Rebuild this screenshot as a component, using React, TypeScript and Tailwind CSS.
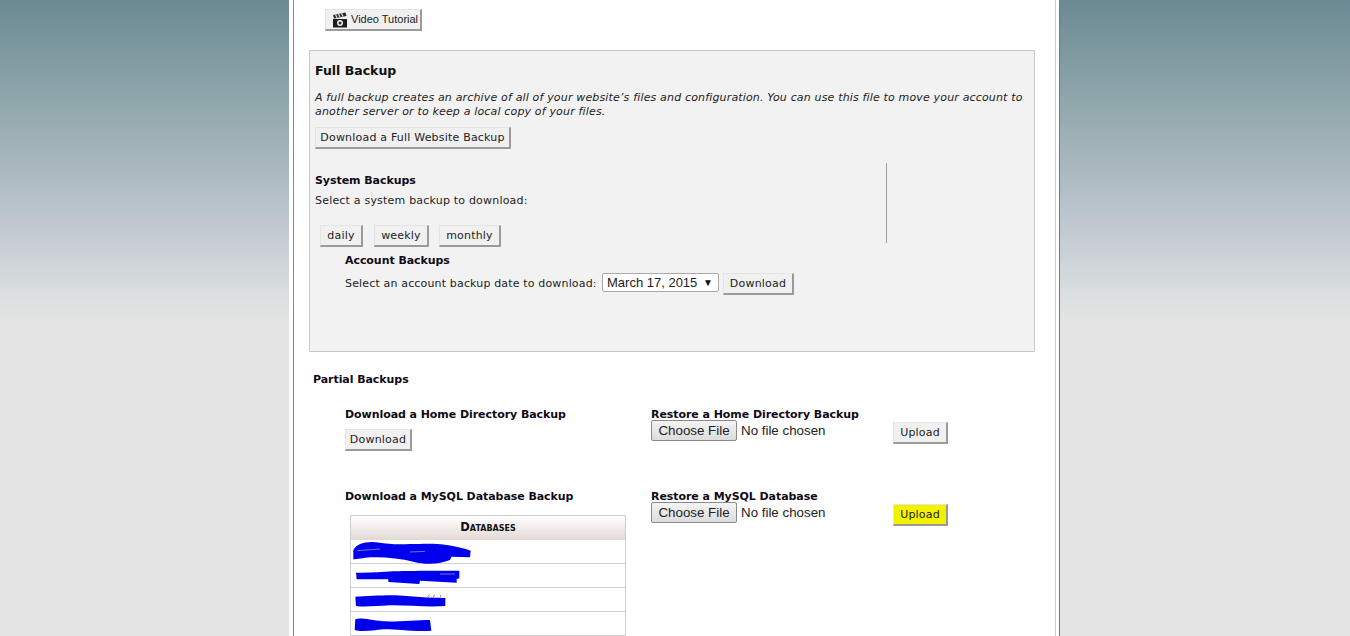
import React from "react";

function Btn({ children, className = "" }: { children: React.ReactNode; className?: string }) {
  return (
    <span
      className={
        "inline-flex align-top items-center justify-center whitespace-nowrap h-[22px] pt-[1px] bg-[#f0f0f0] text-[#222] text-[11px] tracking-[0.2px] border-t border-l border-t-[#e4e4e4] border-l-[#e4e4e4] border-r-2 border-b-2 border-r-[#9a9a9a] border-b-[#9a9a9a] " +
        className
      }
    >
      {children}
    </span>
  );
}

function FileInput() {
  return (
    <div className="flex items-center h-[21px] -mt-[2px] font-['Liberation_Sans',sans-serif] text-[13.33px] text-[#222] whitespace-nowrap">
      <span className="flex items-center justify-center w-[86px] h-[21px] rounded-[2px] border border-[#8a8a8a] bg-gradient-to-b from-[#f4f4f4] to-[#dcdcdc]">
        Choose File
      </span>
      <span className="ml-[4px]">No file chosen</span>
    </div>
  );
}

function Clapper() {
  return (
    <svg width="16" height="16" viewBox="0 0 16 16" className="absolute left-[6px] top-[2px]">
      <path d="M1 7 H15 V15.5 H1 Z" fill="#1c1c1c" />
      <path d="M1 3 L13.5 0.5 L14.5 4 L2 6.5 Z" fill="#2a2a2a" />
      <path d="M3.5 2.5 L5 5.8 M6.5 1.9 L8 5.2 M9.5 1.3 L11 4.6" stroke="#e2e2e2" strokeWidth="1.2" />
      <circle cx="8" cy="11" r="3" fill="#f0f0f0" />
      <circle cx="8" cy="11" r="1.5" fill="#333" />
    </svg>
  );
}

const H = "font-bold text-[11px] tracking-[-0.06px] leading-[14px] text-[#110a16] whitespace-nowrap";
const P = "text-[11px] tracking-[0.2px] text-[#222] whitespace-nowrap";

function Scribbles() {
  return (
    <svg
      viewBox="0 0 900 378"
      width="300"
      height="126"
      className="absolute left-[-11px] top-[-6px] pointer-events-none"
    >
      <g fill="#0000ee">
        <path d="M40 120 C50 100 80 92 120 98 C170 105 190 102 240 102 C290 100 340 105 392 122 L390 142 L335 140 L330 150 C300 162 260 165 220 155 C180 145 130 140 90 142 C70 144 50 148 40 148 Z" />
        <path d="M48 188 C80 190 120 186 160 184 C200 182 300 182 358 182 L358 205 L350 207 L350 218 L240 212 L238 222 L145 216 L145 208 L50 208 Z" />
        <path d="M46 260 C90 258 160 252 200 258 C240 262 280 264 316 264 L316 288 C260 292 200 285 150 286 C110 288 70 292 48 288 Z" />
        <path d="M46 328 C60 322 90 330 130 334 C170 336 230 330 270 330 L274 362 C220 366 160 356 130 358 C100 362 60 366 44 360 Z" />
      </g>
      <path d="M52 122 L120 117 M210 126 L255 124 M300 192 L345 192" stroke="#aab" strokeWidth="2" fill="none" />
      <path d="M262 262 L268 254 M280 262 L284 254 M300 262 L303 255" stroke="#444" strokeWidth="2" fill="none" />
    </svg>
  );
}

export default function App() {
  return (
    <div className="h-[636px] overflow-hidden bg-[linear-gradient(to_bottom,#6b8a93_0px,#93a9ae_110px,#bcc5cd_215px,#dce0e1_300px,#e4e4e4_325px,#e4e4e4_636px)] font-['DejaVu_Sans',sans-serif]">
      <div className="w-[771px] h-[636px] ml-[289px] bg-white pl-[4px] pr-[3px] border-r border-[#777]">
        <div className="h-[636px] border-l border-r border-l-[#888] border-r-[#ccc] pl-[15px]">
          <div className="pl-[16px] pt-[9px] h-[50px]">
            <span className="relative flex items-center h-[22px] w-[97px] pl-[25px] bg-[#f0f0f0] text-[#222] font-['Liberation_Sans',sans-serif] text-[11px] whitespace-nowrap border-t border-l border-t-[#e4e4e4] border-l-[#e4e4e4] border-r-2 border-b-2 border-r-[#9a9a9a] border-b-[#9a9a9a]">
              <Clapper />
              Video Tutorial
            </span>
          </div>

          <section className="w-[726px] h-[302px] bg-[#f2f2f2] border border-[#c8c8c8] pl-[5px]">
            <h2 className="font-bold text-[12.5px] leading-[16px] text-[#111] mt-[12px]">Full Backup</h2>
            <p className="italic text-[11px] tracking-[0.16px] leading-[14px] text-[#222] mt-[12px] w-[716px]">
              A full backup creates an archive of all of your website’s files and configuration. You can use this file to move your account to another server or to keep a local copy of your files.
            </p>
            <div className="mt-[8px] h-[22px]">
              <Btn className="w-[196px]">Download a Full Website Backup</Btn>
            </div>

            <div className="h-[80px] mt-[14px] w-[572px] border-r border-[#9d9d9d]">
              <h3 className={H + " pt-[11px] box-content"}>System Backups</h3>
              <p className={P + " leading-[14px] mt-[6px]"}>Select a system backup to download:</p>
              <div className="flex ml-[5px] mt-[17px]">
                <Btn className="w-[43px]">daily</Btn>
                <Btn className="w-[55px] ml-[11px]">weekly</Btn>
                <Btn className="w-[62px] ml-[10px]">monthly</Btn>
              </div>
            </div>

            <div className="ml-[30px] mt-[11px]">
              <h3 className={H}>Account Backups</h3>
              <div className="flex items-start mt-[5px]">
                <span className={P + " leading-[21px] w-[257px] tracking-[0.16px]"}>Select an account backup date to download:</span>
                <span className="flex items-center justify-between whitespace-nowrap w-[117px] h-[19px] bg-white border border-[#a9a9a9] rounded-[2px] pl-[4px] pr-[5px] font-['Liberation_Sans',sans-serif] text-[13px] text-[#222]">
                  March 17, 2015
                  <span className="text-[10px] text-[#111]">▼</span>
                </span>
                <Btn className="w-[71px] ml-[4px]">Download</Btn>
              </div>
            </div>
          </section>

          <h3 className={H + " mt-[21px] ml-[4px]"}>Partial Backups</h3>
          <div className="grid grid-cols-[306px_242px_55px] ml-[36px] mt-[21px]">
            <div className="h-[82px]">
              <h4 className={H}>Download a Home Directory Backup</h4>
              <Btn className="w-[67px] mt-[7px]">Download</Btn>
            </div>
            <div>
              <h4 className={H}>Restore a Home Directory Backup</h4>
              <FileInput />
            </div>
            <div className="pt-[14px]">
              <Btn className="w-[55px]">Upload</Btn>
            </div>

            <div>
              <h4 className={H}>Download a MySQL Database Backup</h4>
              <div className="relative w-[276px] ml-[5px] mt-[11px] border border-[#cfcfcf]">
                <div className="h-[24px] flex items-center justify-center bg-gradient-to-b from-white to-[#e2d9d4] font-bold text-[11.5px] text-[#111] [font-variant:small-caps]">
                  Databases
                </div>
                <div className="h-[23px]" />
                <div className="h-[24px] border-t border-[#cfcfcf]" />
                <div className="h-[24px] border-t border-[#cfcfcf]" />
                <div className="h-[24px] border-t border-[#cfcfcf]" />
                <Scribbles />
              </div>
            </div>
            <div>
              <h4 className={H}>Restore a MySQL Database</h4>
              <FileInput />
            </div>
            <div className="pt-[14px]">
              <Btn className="w-[55px] !bg-[#f2f200]">Upload</Btn>
            </div>
          </div>
        </div>
      </div>
    </div>
  );
}
